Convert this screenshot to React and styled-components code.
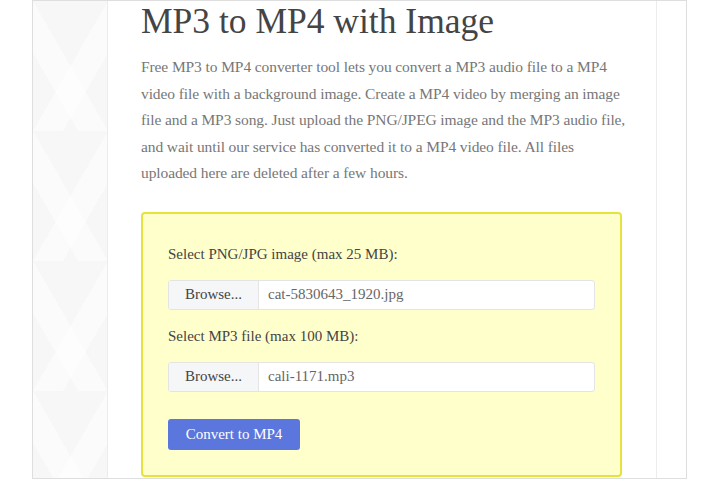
import React from "react";
import styled, { createGlobalStyle } from "styled-components";

const GlobalStyle = createGlobalStyle`
  html, body {
    margin: 0;
    padding: 0;
    background: #ffffff;
  }
  body {
    font-family: "Liberation Serif", "DejaVu Serif", serif;
  }
`;

const Frame = styled.div`
  margin-left: 32px;
  width: 655px;
  height: 479px;
  box-sizing: border-box;
  border: 1px solid #dedede;
  display: grid;
  grid-template-columns: 75px 1fr 30px;
  overflow: hidden;
`;

const Sidebar = styled.div`
  background-color: #f7f7f7;
  background-image:
    linear-gradient(60deg, transparent 30%, rgba(255, 255, 255, 0.45) 30%, rgba(255, 255, 255, 0.45) 50%, transparent 50%),
    linear-gradient(-60deg, transparent 30%, rgba(255, 255, 255, 0.45) 30%, rgba(255, 255, 255, 0.45) 50%, transparent 50%);
  background-size: 75px 130px;
  border-right: 1px solid #ececec;
`;

const Gutter = styled.div`
  border-left: 1px solid #ececec;
`;

const Main = styled.main`
  padding: 0 0 0 33px;
  display: flex;
  flex-direction: column;
`;

const Title = styled.h1`
  margin: 0;
  padding-top: 1px;
  font-size: 35.5px;
  line-height: 38px;
  font-weight: 400;
  color: #444444;
`;

const Intro = styled.p`
  margin: 14px 0 0;
  font-size: 15.5px;
  letter-spacing: -0.1px;
  line-height: 26.5px;
  color: #777777;
`;

const Box = styled.form`
  margin-top: 25px;
  width: 481px;
  box-sizing: border-box;
  background: #ffffcc;
  border: 2px solid #e4e43c;
  border-radius: 4px;
  padding: 30px 25px 25px;
  display: flex;
  flex-direction: column;
`;

const Label = styled.label`
  font-size: 15px;
  line-height: 20px;
  color: #444444;
  margin-bottom: ${(p) => p.$gap}px;
`;

const FileGroup = styled.div`
  display: flex;
  height: 30px;
  width: 427px;
  box-sizing: border-box;
  border: 1px solid #e4e4e4;
  border-radius: 3px;
  background: #ffffff;
  overflow: hidden;
  margin-bottom: ${(p) => p.$gap}px;
`;

const BrowseBtn = styled.span`
  width: 89px;
  flex: none;
  display: flex;
  align-items: center;
  justify-content: center;
  background: #f5f6f8;
  border-right: 1px solid #e4e4e4;
  font-size: 15px;
  color: #444444;
`;

const FileName = styled.span`
  display: flex;
  align-items: center;
  padding-left: 9px;
  font-size: 15px;
  color: #666666;
`;

const Convert = styled.button`
  align-self: flex-start;
  width: 132px;
  height: 31px;
  border: none;
  border-radius: 3px;
  background: #5b76dc;
  color: #ffffff;
  font-family: inherit;
  font-size: 15px;
  padding: 0;
`;

export default function App() {
  return (
    <>
      <GlobalStyle />
      <Frame>
        <Sidebar />
        <Main>
          <Title>MP3 to MP4 with Image</Title>
          <Intro>
            Free MP3 to MP4 converter tool lets you convert a MP3 audio file to a MP4
            <br />
            video file with a background image. Create a MP4 video by merging an image
            <br />
            file and a MP3 song. Just upload the PNG/JPEG image and the MP3 audio file,
            <br />
            and wait until our service has converted it to a MP4 video file. All files
            <br />
            uploaded here are deleted after a few hours.
          </Intro>
          <Box onSubmit={(e) => e.preventDefault()}>
            <Label $gap={16}>Select PNG/JPG image (max 25 MB):</Label>
            <FileGroup $gap={16}>
              <BrowseBtn>Browse...</BrowseBtn>
              <FileName>cat-5830643_1920.jpg</FileName>
            </FileGroup>
            <Label $gap={16}>Select MP3 file (max 100 MB):</Label>
            <FileGroup $gap={27}>
              <BrowseBtn>Browse...</BrowseBtn>
              <FileName>cali-1171.mp3</FileName>
            </FileGroup>
            <Convert type="submit">Convert to MP4</Convert>
          </Box>
        </Main>
        <Gutter />
      </Frame>
    </>
  );
}
